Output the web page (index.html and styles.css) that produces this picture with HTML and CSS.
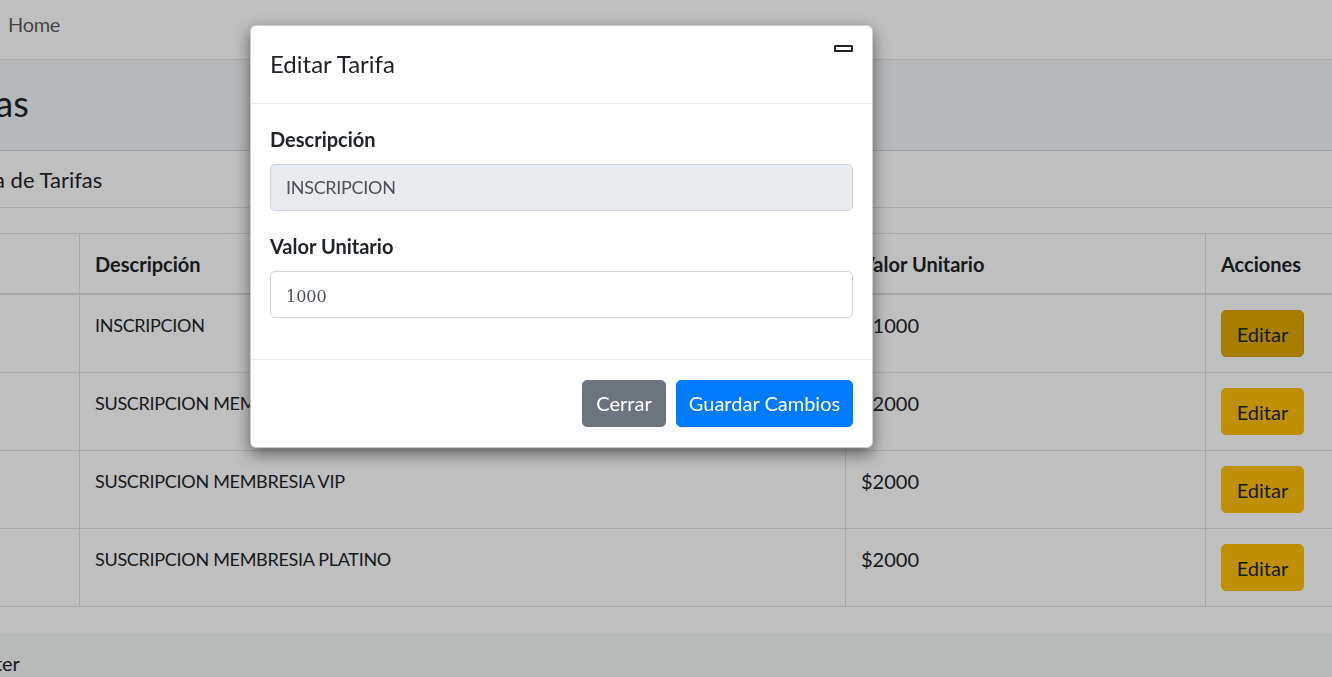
FILE: index.html
```html
<!DOCTYPE html>
<html lang="es">
<head>
<meta charset="utf-8">
<title>Tarifas</title>
<link rel="stylesheet" href="styles.css">
</head>
<body>
<div class="wrapper">
  <nav class="navbar">
    <a class="nav-link" href="#">Home</a>
  </nav>
  <div class="content-wrapper">
    <section class="content-header">
      <h1>Tarifas</h1>
    </section>
    <section class="content">
      <div class="card">
        <div class="card-header">
          <h3 class="card-title">Lista de Tarifas</h3>
        </div>
        <div class="card-body">
          <table class="table">
            <colgroup>
              <col class="c-id"><col class="c-desc"><col class="c-val"><col class="c-act">
            </colgroup>
            <thead>
              <tr><th>ID</th><th>Descripción</th><th>Valor Unitario</th><th>Acciones</th></tr>
            </thead>
            <tbody>
              <tr><td>1</td><td class="upper">INSCRIPCION</td><td>$1000</td><td><button class="btn btn-warning active">Editar</button></td></tr>
              <tr><td>2</td><td class="upper">SUSCRIPCION MEMBRESIA ORO</td><td>$2000</td><td><button class="btn btn-warning">Editar</button></td></tr>
              <tr><td>3</td><td class="upper">SUSCRIPCION MEMBRESIA VIP</td><td>$2000</td><td><button class="btn btn-warning">Editar</button></td></tr>
              <tr><td>4</td><td class="upper">SUSCRIPCION MEMBRESIA PLATINO</td><td>$2000</td><td><button class="btn btn-warning">Editar</button></td></tr>
            </tbody>
          </table>
        </div>
      </div>
    </section>
  </div>
  <footer class="main-footer">Footer</footer>
</div>

<div class="modal-backdrop"></div>

<div class="modal">
  <div class="modal-header">
    <h5 class="modal-title">Editar Tarifa</h5>
    <button class="close" aria-label="Close"></button>
  </div>
  <div class="modal-body">
    <div class="form-group">
      <label>Descripción</label>
      <div class="form-control readonly upper">INSCRIPCION</div>
    </div>
    <div class="form-group">
      <label>Valor Unitario</label>
      <div class="form-control number">1000</div>
    </div>
  </div>
  <div class="modal-footer">
    <button class="btn btn-secondary">Cerrar</button>
    <button class="btn btn-primary">Guardar Cambios</button>
  </div>
</div>
</body>
</html>
```

FILE: styles.css
```css
* { box-sizing: border-box; }

html, body {
  margin: 0;
  padding: 0;
  height: 100%;
  overflow: hidden;
}

body {
  font-family: "Lato", "Noto Sans", sans-serif;
  font-size: 20px;
  line-height: 1.5;
  color: #212529;
  background: #f4f6f9;
}

.wrapper {
  margin-left: -80px;
  width: 1500px;
}

.upper {
  font-size: 18px;
  letter-spacing: -0.3px;
}

/* navbar */
.navbar {
  height: 60px;
  background: #fff;
  border-bottom: 1px solid #dee2e6;
  padding: 9px 0 0 88px;
}
.nav-link {
  color: rgba(0, 0, 0, 0.66);
  text-decoration: none;
  letter-spacing: -0.3px;
}

/* content header */
.content-header {
  height: 90px;
  padding: 22px 0 0 6px;
  background: #f4f6f9;
}
.content-header h1 {
  margin: 0;
  font-size: 36px;
  font-weight: 400;
  line-height: 1.2;
}

/* card */
.card {
  background: #fff;
  border-top: 1px solid #d4d6d8;
}
.card-header {
  height: 57px;
  padding: 16px 0 0 40px;
  border-bottom: 1px solid #dee2e6;
}
.card-title {
  margin: 0;
  font-size: 22px;
  font-weight: 400;
  line-height: 1.2;
}
.card-body {
  padding: 25px 0 26px 25px;
}

/* table */
.table {
  border-collapse: collapse;
  table-layout: fixed;
  width: 1420px;
}
.c-id { width: 134px; }
.c-desc { width: 766px; }
.c-val { width: 360px; }
.c-act { width: 160px; }

.table th,
.table td {
  border: 1px solid #dee2e6;
  padding: 15px;
  text-align: left;
  vertical-align: top;
  line-height: 30px;
}
.table thead th {
  font-weight: 700;
  border-bottom-width: 2px;
  padding-top: 15px;
  padding-bottom: 14px;
}
.table tbody td {
  height: 78px;
  padding-top: 15px;
}

/* buttons */
.btn {
  font-family: inherit;
  font-size: 20px;
  line-height: 30px;
  padding: 7.5px 15px;
  border: 1px solid transparent;
  border-radius: 5px;
  cursor: pointer;
}
.btn-warning {
  background: #ffc107;
  border-color: #ffc107;
  color: #212529;
  width: 83px;
  padding-left: 0;
  padding-right: 0;
}
.btn-warning.active {
  background: #e0a800;
  border-color: #d39e00;
}
.btn-secondary {
  background: #6c757d;
  border-color: #6c757d;
  color: #fff;
  width: 84px;
  padding-left: 0;
  padding-right: 0;
}
.btn-primary {
  background: #007bff;
  border-color: #007bff;
  color: #fff;
  width: 177px;
  padding-left: 0;
  padding-right: 0;
}

/* footer */
.main-footer {
  padding: 15px 0 0 42px;
  height: 60px;
  background: #f6f7f7;
  color: #212529;
}

/* modal */
.modal-backdrop {
  position: fixed;
  inset: 0;
  background: rgba(0, 0, 0, 0.25);
}

.modal {
  position: absolute;
  left: 250px;
  top: 25px;
  width: 623px;
  background: #fff;
  border: 1px solid rgba(0, 0, 0, 0.2);
  border-radius: 6px;
  box-shadow: 0 6px 16px rgba(0, 0, 0, 0.5);
}

.modal-header {
  display: flex;
  justify-content: space-between;
  align-items: flex-start;
  padding: 19px 19px 20px 19px;
  border-bottom: 1px solid #e9ecef;
}
.modal-title {
  margin: 0;
  font-size: 24px;
  font-weight: 400;
  line-height: 37.5px;
}
.close {
  width: 19px;
  height: 7px;
  margin: 0;
  padding: 0;
  border: 2px solid #222;
  background: #fff;
  border-radius: 1px;
}

.modal-body {
  padding: 20px 19px 21px 19px;
}
.form-group {
  margin-bottom: 20px;
}
.form-group label {
  display: block;
  font-weight: 700;
  margin-bottom: 10px;
  line-height: 30px;
}
.form-control {
  height: 47px;
  padding: 7.5px 15px;
  border: 1px solid #ced4da;
  border-radius: 5px;
  color: #495057;
  line-height: 30px;
  background: #fff;
}
.form-control.readonly {
  background: #e9ecef;
}
.form-control.number {
  font-family: "DejaVu Serif", serif;
  font-size: 16px;
  padding-top: 10px;
}

.modal-footer {
  display: flex;
  justify-content: flex-end;
  gap: 10px;
  padding: 20px 19px 20px;
  border-top: 1px solid #e9ecef;
}
```
